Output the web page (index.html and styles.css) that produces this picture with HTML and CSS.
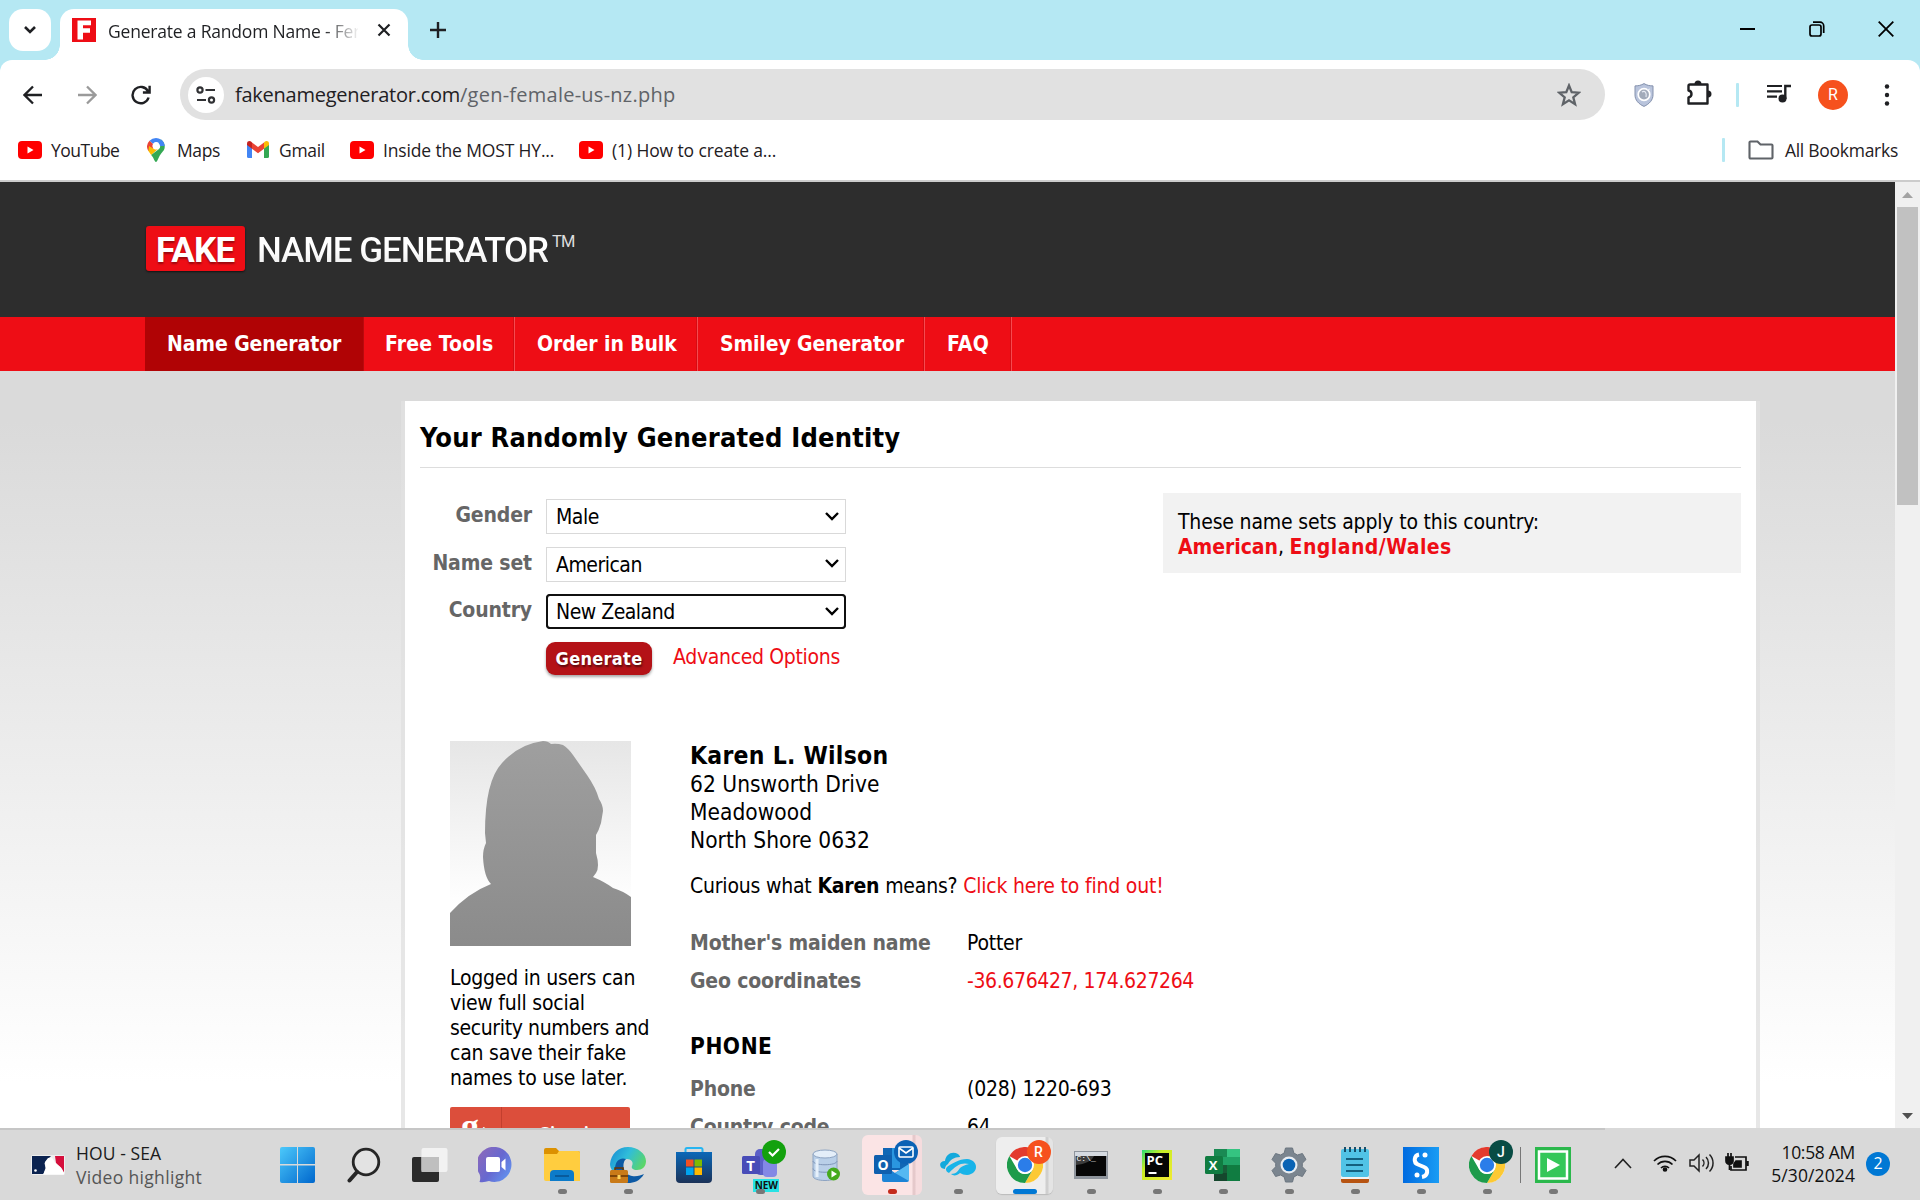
FILE: index.html
```html
<!DOCTYPE html>
<html lang="en">
<head>
<meta charset="utf-8">
<title>Generate a Random Name - Fake Name Generator</title>
<link rel="stylesheet" href="styles.css">
</head>
<body>
<svg width="0" height="0" class="defs" aria-hidden="true">
  <defs>
    <symbol id="youtube" viewBox="0 0 24 18"><rect width="24" height="18" rx="4" fill="#f00"/><path d="M9.500 5.500l6 3.500-6 3.500z" fill="#fff"/></symbol>
    <symbol id="chrome" viewBox="0 0 36 36">
      <circle cx="18" cy="18" r="18" fill="#fff"/>
      <path d="M18 18L2.4 9A18 18 0 0 1 33.6 9z" fill="#e33b2e"/>
      <path d="M18 9h15.6A18 18 0 0 1 18 36l7.8-13.5z" fill="#fcc934"/>
      <path d="M25.800 22.500L18 36A18 18 0 0 1 2.400 9l7.800 13.500A9 9 0 0 0 25.800 22.500z" fill="#1e9b4b"/>
      <circle cx="18" cy="18" r="9" fill="#fff"/><circle cx="18" cy="18" r="7.2" fill="#2b7de9"/>
    </symbol>
  </defs>
</svg>

<header class="browser">
  <div class="tabstrip">
    <div class="tab-search"><svg width="14" height="10" viewBox="0 0 14 10"><path d="M2 2l5 5 5-5" fill="none" stroke="#1f2023" stroke-width="2.6"/></svg></div>
    <div class="tab">
      <svg class="favicon" width="24" height="24" viewBox="0 0 24 24"><rect width="24" height="24" fill="#ee0d15"/><path d="M5.500 2.500h13.500v4.800h-8v3h7v4.400h-7v6.800H5.500z" fill="#fff"/></svg>
      <span class="tab-title">Generate a Random Name - Fen</span>
      <svg class="tab-close" width="14" height="14" viewBox="0 0 14 14"><path d="M1.500 1.500l11 11M12.500 1.500l-11 11" stroke="#1f2023" stroke-width="2.200"/></svg>
    </div>
    <svg class="new-tab" width="16" height="16" viewBox="0 0 16 16"><path d="M8 0v16M0 8h16" stroke="#1f2023" stroke-width="2.400"/></svg>
    <div class="window-buttons">
      <svg width="16" height="16" viewBox="0 0 16 16"><path d="M0 8h15" stroke="#000" stroke-width="2"/></svg>
      <svg width="16" height="16" viewBox="0 0 16 16" fill="none" stroke="#000" stroke-width="1.700"><rect x="1" y="4" width="11" height="11" rx="2"/><path d="M4 1.200h7a3.700 3.700 0 0 1 3.700 3.700v7"/></svg>
      <svg width="16" height="16" viewBox="0 0 16 16"><path d="M.7.700l14.600 14.600M15.300.700L.7 15.300" stroke="#000" stroke-width="1.800"/></svg>
    </div>
  </div>

  <div class="toolbar">
    <svg class="nav-icon" width="20" height="20" viewBox="0 0 20 20" fill="none" stroke="#1f2023" stroke-width="2.300"><path d="M19 10H2M10 1.500L1.500 10l8.500 8.500"/></svg>
    <svg class="nav-icon" width="20" height="20" viewBox="0 0 20 20" fill="none" stroke="#9a9a9a" stroke-width="2.300"><path d="M1 10h17M10 1.500l8.500 8.500-8.500 8.500"/></svg>
    <svg class="nav-icon" width="20" height="20" viewBox="0 0 20 20" fill="none" stroke="#1f2023" stroke-width="2.400"><path d="M17.600 12.500A8.200 8.200 0 1 1 17 6.200M18.600.800v6.700h-6.700"/></svg>
    <div class="omnibox">
      <span class="site-info"><svg width="20" height="18" viewBox="0 0 20 18" fill="none" stroke="#303134" stroke-width="2.200"><circle cx="4" cy="4" r="2.600"/><path d="M9.500 4H19M1 14h9"/><circle cx="15.500" cy="14" r="2.600"/></svg></span>
      <span class="url"><span class="host">fakenamegenerator.com</span><span class="path">/gen-female-us-nz.php</span></span>
      <svg class="star" width="24" height="24" viewBox="0 0 24 24"><path d="M12 2.500l2.700 6.700 7.100.500-5.500 4.600 1.800 7-6.100-3.900-6.100 3.900 1.800-7L2.200 9.700l7.100-.5z" fill="none" stroke="#5f6368" stroke-width="2.300"/></svg>
    </div>
    <svg class="shield" width="20" height="24" viewBox="0 0 20 24"><path d="M10 .6c3 1.800 6 2.300 9 2.300v9c0 5-3.500 9-9 11.500C4.500 21 1 17 1 12V2.900c3 0 6-.5 9-2.300z" fill="#b9c4dc" stroke="#8491ad"/><circle cx="10" cy="11.500" r="5.800" fill="#a2abba" stroke="#fff" stroke-width="1.700"/><path d="M8 9c3-2 5 1 4 5M13 7l3-1" stroke="#e8ecf5" stroke-width="1.200" fill="none"/></svg>
    <svg class="puzzle" width="26" height="26" viewBox="0 0 26 26"><path d="M4 4.500h17.500v19H2.500v-6c4-.8 4-6.200 0-7v-4.500c0-1 .5-1.500 1.500-1.500z" fill="none" stroke="#1f2023" stroke-width="2.400" stroke-linejoin="round"/><path d="M8.500 4a3.500 3.500 0 0 1 7 0zM22 10.500a3.500 3.500 0 0 1 0 7z" fill="#1f2023"/></svg>
    <i class="divider"></i>
    <svg class="music" width="24" height="19" viewBox="0 0 24 19"><path d="M0 2h15M0 7.300h15M0 12.600h10" stroke="#1f2023" stroke-width="2.200"/><circle cx="15.500" cy="14.500" r="4" fill="#1f2023"/><path d="M18.300 15V2H24" fill="none" stroke="#1f2023" stroke-width="2.400"/></svg>
    <span class="avatar">R</span>
    <svg class="dots" width="6" height="22" viewBox="0 0 6 22" fill="#1f2023"><circle cx="3" cy="2.500" r="2.200"/><circle cx="3" cy="11" r="2.200"/><circle cx="3" cy="19.500" r="2.200"/></svg>
  </div>

  <div class="bookmarks">
    <a class="bm bm-youtube"><svg width="24" height="18"><use href="#youtube"/></svg>YouTube</a>
    <a class="bm bm-maps"><svg width="18" height="24" viewBox="0 0 18 24"><path d="M9 0a9 9 0 0 0-6.500 2.800L6 6a4 4 0 0 1 6-1l2-3.500A9 9 0 0 0 9 0z" fill="#4285f4"/><path d="M2.500 2.800A8.500 8.500 0 0 0 1.400 13L6.500 10.500A4 4 0 0 1 6 6z" fill="#ea4335"/><path d="M1.400 13l2.800 4L12 10a4 4 0 0 1-5.800.5L2 8z" fill="#fbbc04"/><path d="M14 1.500L11.700 5a4 4 0 0 1 .3 6l-7.800 6C7 20 7.500 24 9 24s2-4 4.500-7.500S18 12 17.700 8A9 9 0 0 0 14 1.500z" fill="#34a853"/><path d="M14 1.500L11.500 5a4 4 0 0 1 1.500 3h4.700A9 9 0 0 0 14 1.500z" fill="#4285f4"/><circle cx="9" cy="8" r="3.200" fill="#fff"/></svg>Maps</a>
    <a class="bm bm-gmail"><svg width="22" height="17" viewBox="0 0 22 17"><path d="M0 3v12.500A1.500 1.500 0 0 0 1.500 17H5V7z" fill="#4285f4"/><path d="M17 7v10h3.500a1.500 1.500 0 0 0 1.500-1.500V3z" fill="#34a853"/><path d="M5 1.500v6.200l6 4.500 6-4.500V1.500L11 6z" fill="#ea4335"/><path d="M0 2.500C0 .2 2.700-.6 4.300.8L5 1.500v6.200L0 4z" fill="#c5221f"/><path d="M22 2.500C22 .2 19.300-.6 17.700.8l-.7.700v6.200L22 4z" fill="#fbbc04"/></svg>Gmail</a>
    <a class="bm bm-inside"><svg width="24" height="18"><use href="#youtube"/></svg>Inside the MOST HY...</a>
    <a class="bm bm-howto"><svg width="24" height="18"><use href="#youtube"/></svg>(1) How to create a...</a>
    <i class="divider"></i>
    <a class="bm bm-all"><svg width="26" height="20" viewBox="0 0 26 20"><path d="M2.500 1.500h7l3 3h11a1 1 0 0 1 1 1v12a1 1 0 0 1-1 1h-21a1 1 0 0 1-1-1v-15a1 1 0 0 1 1-1z" fill="none" stroke="#5f6368" stroke-width="2.100"/></svg>All Bookmarks</a>
  </div>
</header>

<div class="viewport">
  <main class="page">
    <div class="site-header"><span class="logo-fake">FAKE</span><span class="logo-name">NAME GENERATOR</span><span class="logo-tm">TM</span></div>
    <nav class="site-nav">
      <a class="active">Name Generator</a><a class="n-tools">Free Tools</a><a class="n-bulk">Order in Bulk</a><a class="n-smiley">Smiley Generator</a><a class="n-faq">FAQ</a>
    </nav>
    <section class="card">
      <h1>Your Randomly Generated Identity</h1>
      <div class="options">
        <form class="generator">
          <label>Gender</label><div class="select">Male<svg width="14" height="9" viewBox="0 0 14 9"><path d="M1 1l6 6 6-6"/></svg></div>
          <label>Name set</label><div class="select">American<svg width="14" height="9" viewBox="0 0 14 9"><path d="M1 1l6 6 6-6"/></svg></div>
          <label>Country</label><div class="select focused">New Zealand<svg width="14" height="9" viewBox="0 0 14 9"><path d="M1 1l6 6 6-6"/></svg></div>
          <div class="actions"><span class="generate">Generate</span><a>Advanced Options</a></div>
        </form>
        <aside class="note">These name sets apply to this country:<br><a>American</a>, <a class="england">England/Wales</a></aside>
      </div>
      <div class="identity">
        <div class="side">
          <svg width="181" height="205" viewBox="0 0 181 205">
            <defs>
              <linearGradient id="photo-bg" x2="0" y2="1"><stop stop-color="#e6e6e6"/><stop offset=".8" stop-color="#fff"/></linearGradient>
              <linearGradient id="person" x2="0" y2="1"><stop stop-color="#9f9f9f"/><stop offset="1" stop-color="#8b8b8b"/></linearGradient>
            </defs>
            <rect width="181" height="205" fill="url(#photo-bg)"/>
            <path d="M0 172Q18 152 41 143Q34 136 33 116Q33 108 36 102L35 92Q35 40 52 22Q69 3 93 0Q98 0 101 3Q107 2 113 4Q118 7 123 14L137 34Q146 47 149 58Q153 64 153 70L151 82Q149 89 146 94L146 112Q150 126 146 132L143 136Q155 141 163 147Q173 150 181 156V205H0z" fill="url(#person)"/>
          </svg>
          <p>Logged in users can<br>view full social<br><span class="tight">security numbers and</span><br>can save their fake<br>names to use later.</p>
          <div class="google-signin"><b>g<small>+</small></b><span>Sign in</span></div>
        </div>
        <div class="details">
          <h3>Karen L. Wilson</h3>
          <div class="address">62 Unsworth Drive<br>Meadowood<br>North Shore 0632</div>
          <div class="curious">Curious what <b>Karen</b> means? <a>Click here to find out!</a></div>
          <dl><dt>Mother's maiden name</dt><dd>Potter</dd><dt>Geo coordinates</dt><dd><a class="geo">-36.676427, 174.627264</a></dd></dl>
          <h4>PHONE</h4>
          <dl><dt>Phone</dt><dd>(028) 1220-693</dd><dt>Country code</dt><dd>64</dd></dl>
        </div>
      </div>
    </section>
  </main>
  <div class="scrollbar">
    <svg width="11" height="6" viewBox="0 0 11 6"><path d="M0 6l5.500-6L11 6z" fill="#a3a3a3"/></svg>
    <div class="thumb"></div>
    <svg class="down" width="11" height="6" viewBox="0 0 11 6"><path d="M0 0l5.500 6L11 0z" fill="#505050"/></svg>
  </div>
</div>

<footer class="taskbar">
  <div class="widget">
    <svg width="34" height="20" viewBox="0 0 34 20"><rect width="34" height="20" rx="2" fill="#eee"/><path d="M1 1h19l-3.500 3.500-3 3.500 1 5-2 6H1z" fill="#0b2350"/><path d="M24 1h9v18L31 14l-6-6z" fill="#d50f3c"/><path d="M14 7l3-4 4-.5 3 5 6 5 3 5v2H12l3-6z" fill="#fff"/><circle cx="4.500" cy="15.500" r="1.300" fill="#fff"/></svg>
    <div><span class="score">HOU - SEA</span><span class="caption">Video highlight</span></div>
  </div>
  <div class="apps">
    <span class="app"><svg width="36" height="36" viewBox="0 0 36 36"><defs><linearGradient id="win" x2="1" y2="1"><stop stop-color="#4cc9fb"/><stop offset="1" stop-color="#0067cd"/></linearGradient></defs><path d="M2 0h15v17H0V2a2 2 0 0 1 2-2zM18 0h15a2 2 0 0 1 2 2v15H18zM0 18.500h17V36H2a2 2 0 0 1-2-2zM18 18.500h17V34a2 2 0 0 1-2 2H18z" fill="url(#win)"/></svg></span>
    <span class="app"><svg width="36" height="36" viewBox="0 0 36 36" fill="none" stroke="#262626"><circle cx="20" cy="15" r="12.800" stroke-width="2.800" fill="#e3e3e3"/><path d="M11 25l-7.500 8.500" stroke-width="4" stroke-linecap="round"/></svg></span>
    <span class="app"><svg width="36" height="36" viewBox="0 0 36 36"><rect y="10" width="27" height="25" rx="2" fill="#2b2b2b"/><rect x="9.500" y="1" width="26" height="24" rx="2" fill="#f3f3f3" opacity=".95"/><path d="M9.500 10H27v15H9.500z" fill="#bfbfbf"/></svg></span>
    <span class="app"><svg width="36" height="36" viewBox="0 0 36 36"><defs><linearGradient id="chat" x2="1" y2=".7"><stop stop-color="#9269b7"/><stop offset=".6" stop-color="#6668d0"/><stop offset="1" stop-color="#6390ed"/></linearGradient></defs><path d="M18 0a17 17.500 0 1 1-7 34c-3 1-6 1.500-9.500 1 1-3 1-5 0-8A17 17.500 0 0 1 18 0z" fill="url(#chat)"/><rect x="8" y="10" width="14" height="15" rx="2" fill="#fff"/><path d="M23.500 15l4-3.500v12l-4-3.500z" fill="#fff"/></svg></span>
    <span class="app run"><svg width="36" height="36" viewBox="0 0 36 36"><path d="M0 3a2 2 0 0 1 2-2h10l3 3h19a2 2 0 0 1 2 2v5H0z" fill="#dc9100"/><path d="M0 7h13l2-3h19a2 2 0 0 1 2 2v28H2a2 2 0 0 1-2-2z" fill="#ffcd3f"/><path d="M6 34v-7a4 4 0 0 1 4-4h16a4 4 0 0 1 4 4v7z" fill="#0c7bc9"/><path d="M11 29h14" stroke="#07508c" stroke-width="1.500"/></svg></span>
    <span class="app run"><svg width="36" height="36" viewBox="0 0 36 36"><defs><linearGradient id="edge" x2="1" y2=".5"><stop stop-color="#1688d3"/><stop offset=".5" stop-color="#30bdda"/><stop offset="1" stop-color="#5bd667"/></linearGradient></defs><path d="M0 17C1 7 8 0 18 0s18 7 18 14c0 6-4 9-9 9-4 0-6-2-5-4 2-4-1-7-5-7-7 0-8 10-6 17C4 27 0 22 0 17z" fill="url(#edge)"/><path d="M5 22c0-9 6-12 11-10-4 3-4 15 6 17 5 1 9-1 12-2-4 7-10 9-16 9C10 36 5 29 5 22z" fill="#0c59a4"/><rect y="23" width="18" height="13" rx="1.500" fill="#c97a18"/><path d="M5 23v-2h8v2M0 29h18" fill="none" stroke="#673604" stroke-width="1.600"/><rect x="7.500" y="28" width="3" height="4" fill="#ffd55c"/></svg></span>
    <span class="app"><svg width="36" height="36" viewBox="0 0 36 36"><defs><linearGradient id="store" x2="0" y2="1"><stop stop-color="#0a68b8"/><stop offset="1" stop-color="#1b3258"/></linearGradient></defs><path d="M9.500 7V2.500a1.500 1.500 0 0 1 1.500-1.500h14a1.500 1.500 0 0 1 1.500 1.500V7" fill="none" stroke="#27b5f1" stroke-width="2"/><path d="M0 5h36v27a4 4 0 0 1-4 4H4a4 4 0 0 1-4-4z" fill="url(#store)"/><path d="M10 12.500h7.500v7H10z" fill="#f25022"/><path d="M18.500 12.500H26v7h-7.500z" fill="#7fba00"/><path d="M10 20.500h7.500V28H10z" fill="#00a4ef"/><path d="M18.500 20.500H26V28h-7.500z" fill="#ffb900"/></svg></span>
    <span class="app run"><svg width="36" height="36" viewBox="0 0 36 36"><rect x="13" y="2" width="16" height="26" rx="5" fill="#5b5fc7"/><rect x="21" y="12" width="14" height="18" rx="4" fill="#8388e5"/><rect y="9" width="18" height="18" rx="1.500" fill="#484cb8"/></svg><em class="teams-t">T</em><em class="teams-new">NEW</em><i class="badge ok"><svg width="14" height="12" viewBox="0 0 14 12"><path d="M2 6l3.500 3.500L12 3" fill="none" stroke="#fff" stroke-width="2.200"/></svg></i></span>
    <span class="app"><svg width="36" height="36" viewBox="0 0 36 36"><path d="M5 7v22c0 6 24 6 24 0V7z" fill="#b9cfe8" stroke="#8ea4c2"/><path d="M5 14c0 5 24 5 24 0M5 21.500c0 5 24 5 24 0" fill="none" stroke="#8197b9"/><ellipse cx="17" cy="7" rx="12" ry="4" fill="#e4eef9" stroke="#8ea4c2"/><path d="M9 12v18" stroke="#e6f0fa" stroke-width="3"/><circle cx="25.500" cy="27" r="6.500" fill="#45aa1c"/><path d="M23.500 23.500l5.500 3.500-5.500 3.500z" fill="#fff"/></svg></span>
    <span class="app run alert"><svg width="36" height="36" viewBox="0 0 36 36"><rect x="9" y="1" width="25" height="22" fill="#1066b5"/><path d="M18 1h8v20h-8z" fill="#2a96e0"/><path d="M8 17l13 9 14-9v16a2 2 0 0 1-2 2H10a2 2 0 0 1-2-2z" fill="#1c83d6"/><path d="M21 26l14-9v17z" fill="#55b8f2"/><rect y="8" width="18" height="19" rx="1.500" fill="#0f5fae"/></svg><em class="outlook-o">O</em><i class="badge mail"><svg width="16" height="12" viewBox="0 0 16 12" fill="none" stroke="#fff" stroke-width="1.600"><rect x="1" y="1" width="14" height="10" rx="1"/><path d="M1 2l7 5 7-5"/></svg></i></span>
    <span class="app run"><svg width="36" height="36" viewBox="0 0 36 36"><path d="M5 22C-1 22-2 14 5 14 6 7 12 4 18 7c1 1 2 2 2 3-6 0-10 3-12 7-2 1-3 3-3 5z" fill="#13a9dc"/><path d="M9 26c-3-1-4-4-2-6 4-3 12-8 20-8 12 1 12 15 0 16-3 0-5-1-7-2-3 3-7 3-9 1 5 0 7-3 9-6 2-2 5-3 9-4-7-2-13 1-20 9z" fill="#18b4e9"/></svg></span>
    <span class="app run current"><svg width="36" height="36"><use href="#chrome"/></svg><i class="badge orange">R</i></span>
    <span class="app run"><svg width="36" height="36" viewBox="0 0 36 36"><rect x="1" y="4" width="34" height="28" fill="#8e949c"/><rect x="2" y="5" width="32" height="4" fill="#d5dae1"/><rect x="3" y="9" width="30" height="20" fill="#070707"/><path d="M3 9h18c-2 5-9 8-18 9z" fill="#3c3c3c"/></svg><em class="cmd-text">C:\_</em></span>
    <span class="app run"><svg width="36" height="36" viewBox="0 0 36 36"><defs><linearGradient id="pc" x2="1" y2="1"><stop stop-color="#27dc76"/><stop offset=".35" stop-color="#c8ee25"/><stop offset="1" stop-color="#f1ea32"/></linearGradient></defs><rect x="3" y="3" width="30" height="30" fill="url(#pc)"/><rect x="6" y="6" width="24" height="24" fill="#050505"/><path d="M9.500 26h8" stroke="#fff" stroke-width="2"/></svg><em class="pc-text">PC</em></span>
    <span class="app run"><svg width="36" height="36" viewBox="0 0 36 36"><rect x="9" y="2" width="26" height="32" rx="2" fill="#21a366"/><path d="M9 2h13v8H9z" fill="#1a8a53"/><path d="M22 2h13v8H22z" fill="#35c481"/><path d="M9 18h13v8H9z" fill="#185c37"/><path d="M22 18h13v16H22z" fill="#107c41"/><path d="M9 26h13v8H9z" fill="#15472d"/><rect y="9" width="18" height="18" rx="1.500" fill="#107c41"/></svg><em class="excel-x">X</em></span>
    <span class="app run"><svg width="36" height="36" viewBox="0 0 36 36"><path d="M14.500 1h7l1.300 5 3.600 2 5-1.500 3.600 6-3.700 3.700v3.600l3.700 3.700-3.600 6-5-1.500-3.600 2-1.300 5h-7l-1.300-5-3.600-2-5 1.500-3.600-6 3.700-3.700v-3.600L1 12.500l3.600-6 5 1.500 3.600-2z" fill="#7b858f" stroke="#6c7680"/><circle cx="18" cy="18" r="8.500" fill="#e9eef3"/><circle cx="18" cy="18" r="6.300" fill="#0a63b4"/></svg></span>
    <span class="app run"><svg width="36" height="36" viewBox="0 0 36 36"><rect x="4" y="29" width="28" height="7" rx="2" fill="#b75412"/><rect x="4" y="28" width="28" height="4" fill="#f3f3f3"/><rect x="4" y="2" width="28" height="28" rx="2" fill="#51c3e6"/><path d="M9 12h17M9 18h17M9 24h17" stroke="#14607f" stroke-width="2"/><path d="M8 0v5M13 0v5M18 0v5M23 0v5M28 0v5" stroke="#174f6b" stroke-width="2"/></svg></span>
    <span class="app run"><svg width="36" height="36" viewBox="0 0 36 36"><defs><linearGradient id="sb" x2="1"><stop stop-color="#006be0"/><stop offset="1" stop-color="#199cf4"/></linearGradient></defs><rect width="36" height="36" fill="url(#sb)"/><path d="M16 7.500c-5 1-6 8-1 10l6 2.500c5 2 4 9-2 10" fill="none" stroke="#fff" stroke-width="4"/><circle cx="22" cy="8" r="2.500" fill="#fff"/><circle cx="14" cy="28" r="2.500" fill="#fff"/></svg></span>
    <span class="app run"><svg width="36" height="36"><use href="#chrome"/></svg><i class="badge teal">J</i></span>
    <span class="app run ruled"><svg width="36" height="36" viewBox="0 0 36 36"><rect width="36" height="36" fill="#2bb84c"/><rect x="4" y="4.500" width="28" height="27" fill="#35c759" stroke="#fff" stroke-width="2.500"/><path d="M12 11l13 7-13 7z" fill="#fff"/></svg></span>
  </div>
  <div class="tray">
    <svg width="18" height="11" viewBox="0 0 18 11"><path d="M1 10l8-8.500 8 8.500" fill="none" stroke="#222" stroke-width="1.600"/></svg>
    <svg class="wifi" width="24" height="18" viewBox="0 0 24 18" fill="none" stroke="#111" stroke-width="1.700"><path d="M1 7a15.500 15.500 0 0 1 22 0M4.500 10.500a10.600 10.600 0 0 1 15 0M8 14a5.700 5.700 0 0 1 8 0"/><circle cx="12" cy="15.500" r="1.500" fill="#111"/></svg>
    <svg class="speaker" width="25" height="20" viewBox="0 0 25 20" fill="none" stroke="#222" stroke-width="1.500"><path d="M1 7h4l5-5v16l-5-5H1zM13.500 6.500a5 5 0 0 1 0 7M17 4a8.500 8.500 0 0 1 0 12M20.500 1.500a12 12 0 0 1 0 17"/></svg>
    <svg class="battery" width="24" height="20" viewBox="0 0 24 20" fill="none" stroke="#111" stroke-width="1.700"><path d="M10 4h11v13H6v-4"/><path d="M22.500 8v5" stroke-width="2.500"/><path d="M11 8h5v6H9v-3z" fill="#111"/><path d="M1 4h7v4a3 3 0 0 1-3.500 3A3 3 0 0 1 1 8zM3 0v4M6 0v4M4.500 10v7" fill="#111"/></svg>
    <div class="clock">10:58 AM<br><span>5/30/2024</span></div>
    <span class="count">2</span>
  </div>
</footer>
</body>
</html>
```
FILE: styles.css
```css
* { box-sizing: border-box; }

body {
  margin: 0;
  width: 1920px;
  height: 1200px;
  overflow: hidden;
  display: flex;
  flex-direction: column;
  font-family: "Open Sans", "Noto Sans", sans-serif;
  color: #1f2023;
}

svg { display: block; flex: none; }
.defs { position: absolute; }

/* browser chrome */
.browser { flex: none; height: 182px; background: #b5e8f3; border-bottom: 2px solid #ccc; }
.tabstrip { display: flex; height: 60px; padding: 9px 21px 0 9px; }
.tab-search {
  width: 42px; height: 42px; border-radius: 14px; background: #fff;
  display: flex; align-items: center; justify-content: center;
}
.tab {
  position: relative;
  width: 348px; height: 51px; margin-left: 9px; padding: 0 17px 0 12px;
  display: flex; align-items: flex-start;
  background: #fff; border-radius: 14px 14px 0 0;
}
.tab::before, .tab::after {
  content: ""; position: absolute; bottom: 0; width: 15px; height: 15px;
}
.tab::before { left: -15px; background: radial-gradient(circle at 0 0, transparent 14.5px, #fff 15px); }
.tab::after { right: -15px; background: radial-gradient(circle at 100% 0, transparent 14.5px, #fff 15px); }
.favicon { margin-top: 9px; }
.tab-title {
  width: 250px; margin-left: 12px; overflow: hidden; white-space: nowrap;
  font-size: 17.5px; line-height: 45px; letter-spacing: -0.2px;
  -webkit-mask-image: linear-gradient(90deg, #000 215px, transparent 252px);
  mask-image: linear-gradient(90deg, #000 215px, transparent 252px);
}
.tab-close { margin: 14px 0 0 19px; }
.new-tab { margin: 13px 0 0 22px; }
.window-buttons { margin-left: auto; display: flex; gap: 53px; padding: 12px 5px 0 0; }

.toolbar {
  display: flex; align-items: center; height: 69px;
  background: #fff; border-radius: 12px 12px 0 0; padding-left: 23px;
}
.nav-icon { margin-right: 34px; }
.omnibox {
  width: 1425px; height: 51px; margin-left: -5px; border-radius: 26px; background: #e1e1e1;
  display: flex; align-items: center;
}
.site-info {
  width: 36px; height: 36px; margin-left: 8px; border-radius: 50%; background: #fff;
  display: flex; align-items: center; justify-content: center;
}
.url { margin: -1px 0 0 11px; font-size: 20px; }
.host { letter-spacing: -0.25px; }
.path { color: #5f6368; letter-spacing: 0.24px; }
.star { margin: 0 24px 0 auto; }
.shield { margin-left: 29px; }
.puzzle { margin: 0 0 3px 32px; }
.divider { width: 3px; height: 24px; background: #b5e8f3; border-radius: 1px; }
.toolbar .divider { margin-left: 24px; }
.music { margin: 0 0 2px 28px; }
.avatar {
  width: 30px; height: 30px; margin-left: 27px; border-radius: 50%; background: #f6511d;
  color: #fff; font: 16px/30px Roboto, sans-serif; text-align: center;
}
.dots { margin-left: 36px; }

.bookmarks { display: flex; align-items: center; height: 51px; padding: 0 22px 9px 18px; background: #fff; }
.bm { display: flex; align-items: center; gap: 9px; height: 24px; white-space: nowrap; font-size: 17.5px; line-height: 22px; letter-spacing: -0.15px; padding-bottom: 1px; }
.bm-youtube { width: 129px; letter-spacing: -0.5px; }
.bm-maps { width: 100px; gap: 12px; letter-spacing: -0.4px; }
.bm-gmail { width: 103px; gap: 10px; letter-spacing: -0.3px; }
.bm-inside { width: 229px; }
.bm-howto { letter-spacing: -0.12px; }
.bookmarks .divider { margin-left: auto; }
.bm-all { margin-left: 23px; gap: 11px; letter-spacing: -0.27px; }

/* web page */
.viewport {
  flex: none; height: 946px; display: flex; overflow: hidden;
  font-family: "DejaVu Sans Condensed", "DejaVu Sans", sans-serif;
  font-size: 21px; color: #000;
}
.viewport a { color: #ee0d15; }
.page { width: 1895px; background: linear-gradient(#dadada 189px, #dadada 240px, #fff 900px); }
.site-header { height: 135px; padding: 44px 0 0 146px; display: flex; background: #2d2d2d; font-family: Roboto, sans-serif; }
.logo-fake {
  width: 99px; height: 45px; padding-left: 10px; border-radius: 3px; background: #ee0d15; color: #fff;
  font-size: 35px; font-weight: 700; line-height: 49px; letter-spacing: -0.8px;
  text-shadow: 0 2px 2px rgba(0, 0, 0, .35); box-shadow: 0 1px 2px rgba(0, 0, 0, .6);
}
.logo-name {
  margin-left: 12px; font-size: 35px; font-weight: 500; line-height: 49px; letter-spacing: -1.05px;
  background: linear-gradient(#fff 25%, #cfcfcf 75%); -webkit-background-clip: text; background-clip: text; color: transparent;
}
.logo-tm { margin: 8px 0 0 4px; font-size: 16.5px; line-height: 16px; letter-spacing: -1px; color: #ddd; }
.site-nav { display: flex; height: 54px; padding-left: 145px; background: #ee0d15; font-weight: 700; line-height: 54px; letter-spacing: -0.1px; }
.site-nav a { color: #fff; padding-left: 22px; border-right: 1px solid #f54a50; box-shadow: inset -1px 0 #d50b12; white-space: nowrap; }
.site-nav .active { width: 219px; background: #b00305; border-right-color: #b90a0d; box-shadow: none; }
.site-nav .n-tools { width: 151px; padding-left: 21px; letter-spacing: 0.15px; }
.n-bulk { width: 183px; letter-spacing: -0.1px; }
.n-smiley { width: 227px; letter-spacing: -0.13px; }
.site-nav .n-faq { width: 87px; letter-spacing: 0.3px; }

.card { width: 1359px; height: 900px; margin: 30px 0 0 401px; padding: 0 15px; background: #fff padding-box; border: 0 solid rgba(225, 225, 225, .8); border-width: 0 4px; }
h1 { height: 67px; margin: 0; font-size: 27px; line-height: 73px; letter-spacing: 0.2px; border-bottom: 1px solid #ddd; }
.options { display: flex; justify-content: space-between; height: 273px; }
.generator { display: grid; grid-template-columns: 112px 300px; grid-auto-rows: 35px; row-gap: 12.5px; column-gap: 14px; padding-top: 31px; }
.generator label { text-align: right; color: #666; font-weight: 700; line-height: 32px; letter-spacing: -0.15px; }
.select { display: flex; align-items: center; justify-content: space-between; padding: 1px 6px 0 9px; border: 1px solid #d9d9d9; background: #fff; letter-spacing: -0.5px; }
.select path { fill: none; stroke: #000; stroke-width: 2.4; }
.select svg { margin-top: -2px; }
.focused { outline: 2px solid #101010; outline-offset: -2px; border-color: #101010; border-radius: 4px; }
.actions { grid-column: 2; display: flex; white-space: nowrap; letter-spacing: -0.33px; line-height: 31px; }
.generate {
  width: 106px; height: 33px; margin-right: 21px; border-radius: 9px; background: #b41217; color: #fff;
  font-size: 18px; font-weight: 700; line-height: 33px; letter-spacing: 0.3px; text-align: center;
  text-shadow: 1px 2px 2px rgba(0, 0, 0, .5); box-shadow: 0 2px 3px rgba(0, 0, 0, .35);
}
.note { width: 578px; height: 80px; margin-top: 25px; padding: 17px 15px 0; background: #f2f2f2; line-height: 25px; letter-spacing: -0.17px; }
.note a { font-weight: 700; letter-spacing: -0.05px; }
.note .england { letter-spacing: 0.45px; }

.identity { display: flex; padding-left: 30px; line-height: 28px; letter-spacing: -0.23px; }
.side { width: 240px; }
.side p { margin: 20px 0 16px; line-height: 25px; }
.tight { letter-spacing: -0.37px; }
.google-signin { width: 180px; height: 54px; display: flex; overflow: hidden; border-radius: 2px; background: #dc4e3b; color: #fff; }
.google-signin b { width: 52px; padding: 2px 0 0 11px; border-right: 1px solid #c33f2e; font: 700 36px/34px "Liberation Serif", serif; }
.google-signin small { font-size: 18px; }
.google-signin span { padding: 15px 0 0 37px; font: 600 20px/24px "Open Sans", sans-serif; }
h3 { margin: 0; font-size: 24.5px; line-height: 29px; letter-spacing: 0.25px; }
.address { font-size: 22.5px; letter-spacing: 0.04px; }
.curious { margin-top: 18px; letter-spacing: -0.2px; }
.details dl { display: grid; grid-template-columns: 277px auto; grid-auto-rows: 38px; align-items: center; margin: 24px 0 0; }
.details dt { font-weight: 700; color: #666; letter-spacing: -0.17px; }
.details dd { margin: 0; }
.geo { letter-spacing: -0.37px; }
h4 { margin: 32px 0 0; font-size: 22.5px; line-height: 28px; letter-spacing: 0.55px; }
.details h4 + dl { margin-top: 10px; }

.scrollbar { width: 25px; background: #f0f0f0; display: flex; flex-direction: column; align-items: center; padding: 10px 0 9px; }
.thumb { width: 21px; height: 298px; margin-top: 9px; background: #c1c1c1; }
.scrollbar .down { margin-top: auto; }

/* taskbar */
.taskbar {
  position: relative;
  flex: none; height: 72px; display: flex; align-items: flex-start; background: #d9d9d9;
}
.taskbar::before { content: ""; position: absolute; top: 0; left: 0; width: 1605px; height: 2px; background: #c6c6c6; }
.widget { display: flex; width: 265px; padding: 13px 0 0 31px; }
.widget svg { margin: 14px 11px 0 0; }
.widget span { display: block; font-size: 17.5px; line-height: 24px; white-space: nowrap; }
.score { color: #1b1b1b; letter-spacing: 0.1px; }
.caption { color: #555; letter-spacing: 0.33px; }
.apps { display: flex; }
.app { position: relative; width: 66.06px; height: 72px; display: flex; justify-content: center; padding-top: 19px; }
.app > svg { position: relative; }
.run::after { content: ""; position: absolute; left: 29px; top: 61px; width: 9px; height: 5px; border-radius: 3px; background: #777; }
.alert::before, .current::before { content: ""; position: absolute; left: 3px; top: 7px; width: 60px; height: 60px; border-radius: 6px; background: linear-gradient(90deg, #fbe4e5 50px, #e5c9cb 51px, #e5c9cb 53px, #f6dcde 54px); }
.alert::after { background: #c42b1c; }
.current::before { left: 4px; top: 9px; width: 57px; height: 57px; background: linear-gradient(90deg, #eee 49px, #cfcfcf 50px, #cfcfcf 52px, #e4e4e4 53px); box-shadow: 0 1px 1px #bbb; }
.current::after { left: 21px; width: 24px; background: #0078d4; }
.ruled::before { content: ""; position: absolute; left: 0; top: 19px; width: 1px; height: 36px; background: #777; }
.app em { position: absolute; font-style: normal; font-weight: 700; color: #fff; line-height: 1; }
.teams-t { left: 19px; top: 30px; font-size: 15px; }
.app .teams-new { left: 26px; top: 51px; width: 26px; height: 13px; background: #27e2e4; color: #111; font-size: 10px; line-height: 12px; text-align: center; }
.outlook-o { left: 18px; top: 30px; font-size: 14px; }
.app .cmd-text { left: 19px; top: 27px; font: 8px/8px "Liberation Mono", monospace; }
.pc-text { left: 23px; top: 26px; font-size: 13px; }
.excel-x { left: 19px; top: 31px; font-size: 13px; }
.badge {
  position: absolute; left: 35px; top: 12px; width: 24px; height: 24px; border-radius: 50%;
  display: flex; align-items: center; justify-content: center;
  color: #fff; font: 500 14px/24px Roboto, sans-serif;
}
.ok { background: #13a10e; }
.mail { background: #0b62b5; }
.orange { background: #f6511d; }
.teal { background: #084c44; }
.tray { display: flex; align-items: flex-start; margin-left: auto; padding-right: 30px; }
.tray > svg { margin-top: 30px; }
.tray .wifi { margin: 26px 0 0 21px; }
.tray .speaker { margin: 25px 0 0 12px; }
.tray .battery { margin: 25px 0 0 11px; }
.clock { width: 106px; padding-top: 13px; font-size: 17.5px; line-height: 23px; text-align: right; letter-spacing: -0.3px; color: #111; }
.clock span { letter-spacing: 0.1px; }
.count { width: 24px; height: 24px; margin: 24px 0 0 11px; border-radius: 50%; background: #0078d4; color: #fff; font-size: 16px; line-height: 23px; text-align: center; }
```
